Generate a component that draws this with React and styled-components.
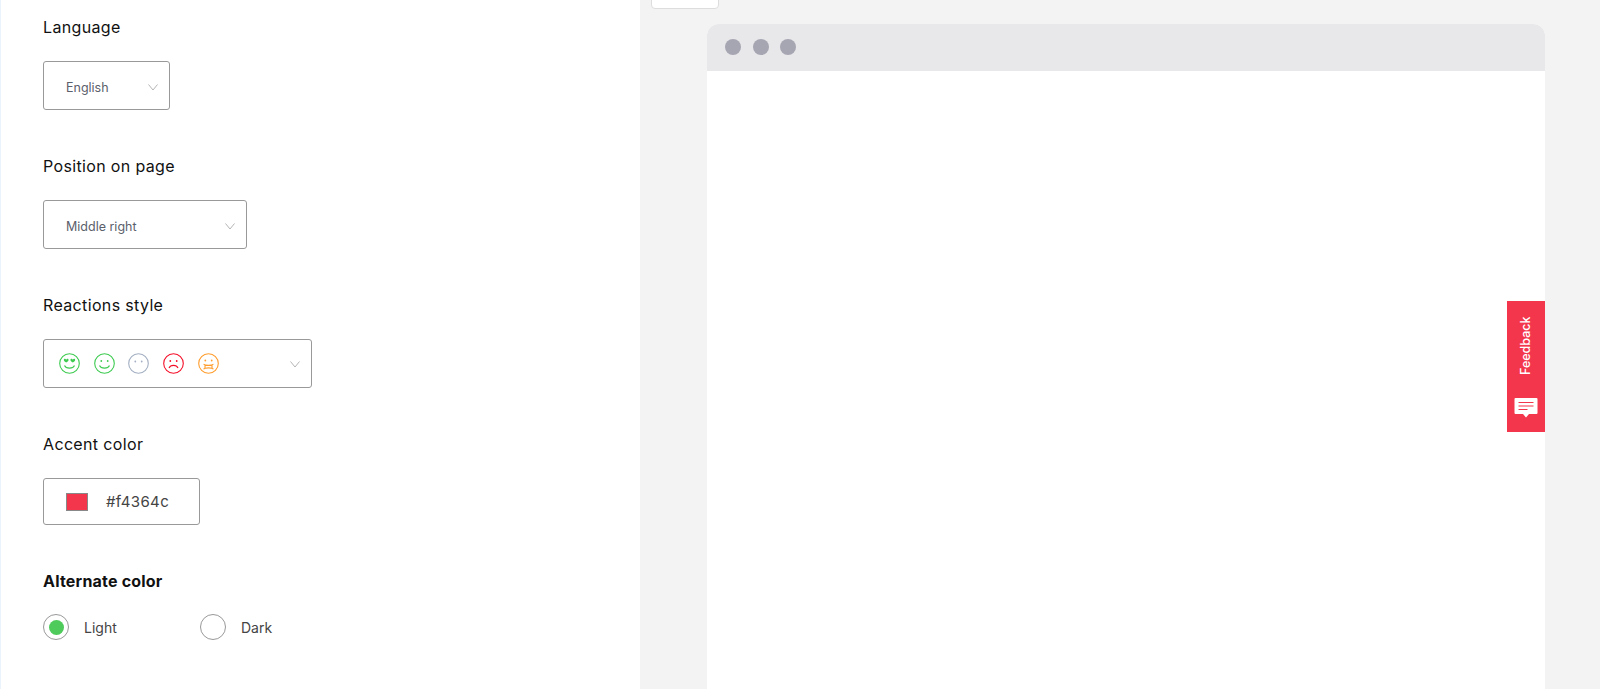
import React from "react";
import styled, { createGlobalStyle } from "styled-components";

const Global = createGlobalStyle`
  html, body { margin: 0; padding: 0; height: 100%; overflow: hidden; background: #fff; }
  body { font-family: "Inter", "Noto Sans", sans-serif; }
`;
const Page = styled.div`display: flex; height: 689px; overflow: hidden;`;
const Sidebar = styled.aside`
  width: 640px; flex: none; box-sizing: border-box; padding: 17px 0 0 43px;
  background: #fff; border-left: 1px solid #eaf3fb;
  display: flex; flex-direction: column; align-items: flex-start;
`;
const Field = styled.section`height: 139px; display: flex; flex-direction: column; align-items: flex-start;`;
const AltField = styled.section`margin-top: -2px;`;
const Label = styled.h3`
  margin: 0 0 24px -1px; font-size: 16px; line-height: 20px; letter-spacing: ${p => p.$bold ? ".2px" : ".35px"};
  font-weight: ${p => p.$bold ? 700 : 400}; color: #111;
`;
const Box = styled.div`
  margin-left: -1px; box-sizing: border-box; width: ${p => p.$w}px; height: ${p => p.$h || 49}px;
  border: 1px solid #999; border-radius: 3px; background: #fff;
  padding: ${p => p.$top || 0}px 11px 0 ${p => p.$pad || 22}px;
  display: flex; align-items: center; justify-content: space-between;
  font-size: 12.5px; color: #5b606b;
`;
const Faces = styled.div`display: flex; gap: 13.7px; margin-top: -1px;`;
const HexRow = styled.div`display: flex; align-items: center; gap: 18px; font-size: 15px; letter-spacing: .35px; color: #444;`;
const Swatch = styled.span`width: 22px; height: 18px; box-sizing: border-box; background: #f4364c; border: 1px solid #888;`;
const Radios = styled.div`display: flex; margin: -1px 0 0 -1px;`;
const RadioItem = styled.label`width: 157px; display: flex; align-items: center; gap: 15px; font-size: 14px; color: #444;`;
const RadioMark = styled.span`
  width: 26px; height: 26px; box-sizing: border-box; border-radius: 50%; border: 1px solid #999;
  display: flex; align-items: center; justify-content: center;
  &::after { content: ""; width: 15px; height: 15px; border-radius: 50%; background: ${p => p.$on ? "#4fcb5c" : "transparent"}; }
`;
const Stage = styled.main`
  flex: 1; background: #f3f3f3; position: relative; padding: 23.5px 55px 0 67px; box-sizing: border-box;
`;
const Tab = styled.div`
  position: absolute; left: 10.5px; top: -4px; width: 68px; height: 13px; box-sizing: border-box;
  background: #fff; border: 1px solid #ddd; border-radius: 4px;
`;
const Browser = styled.div`
  height: 100%; background: #fff; border-radius: 12px 12px 0 0; position: relative; overflow: hidden;
`;
const BrowserBar = styled.div`
  height: 47px; background: #e8e8ea; display: flex; align-items: center; gap: 11.5px; padding-left: 18px;
`;
const Dot = styled.span`width: 16px; height: 16px; border-radius: 50%; background: #a6a6b3;`;
const FeedbackTab = styled.div`
  position: absolute; right: 0; top: 277.5px; width: 38px; height: 131px; background: #f4364c;
  display: flex; flex-direction: column; align-items: center; color: #fff;
`;
const FeedbackText = styled.span`
  writing-mode: vertical-rl; transform: rotate(180deg); font-size: 12.5px; font-weight: 500; line-height: 14px;
  margin-top: 14px; height: 60px; text-align: left;
`;
const Chat = styled.svg`margin-top: 22px;`;

const Chevron = () => (
  <svg width="10" height="7" viewBox="0 0 10 7" fill="none" stroke="#b5b5b5" strokeWidth="1"><path d="M.5.5L5 6 9.500.5" /></svg>
);

const Face = ({ color, children }) => (
  <svg width="21" height="21" viewBox="0 0 21 21" fill="none" stroke={color} strokeWidth="1.100">
    <circle cx="10.500" cy="10.500" r="9.800" />
    {children}
  </svg>
);

const Eyes = ({ color, y }) => (
  <>
    <circle cx="7.300" cy={y} r=".9" fill={color} stroke="none" />
    <circle cx="13.700" cy={y} r=".9" fill={color} stroke="none" />
  </>
);

const App = () => (
  <>
    <Global />
    <Page>
      <Sidebar>
        <Field>
          <Label>Language</Label>
          <Box $w={127} $top={3}>English<Chevron /></Box>
        </Field>
        <Field>
          <Label>Position on page</Label>
          <Box $w={204} $top={3}>Middle right<Chevron /></Box>
        </Field>
        <Field>
          <Label>Reactions style</Label>
          <Box $w={269} $pad={15} $top={1}>
            <Faces>
              <Face color="#3ecb50">
                <path d="M4.800 7c0-1.500 1.900-1.500 2.400-.3.500-1.200 2.400-1.200 2.400.3 0 1.200-2.400 2.600-2.400 2.600s-2.400-1.400-2.400-2.600zM11.400 7c0-1.500 1.900-1.500 2.400-.3.500-1.200 2.400-1.200 2.400.3 0 1.200-2.400 2.600-2.400 2.600s-2.400-1.400-2.400-2.600z" fill="#3ecb50" stroke="none" />
                <path d="M5.500 12.500c1.500 3.500 8.500 3.500 10 0" />
              </Face>
              <Face color="#3ecb50">
                <Eyes color="#3ecb50" y={8} />
                <path d="M5.500 12.500c1.500 3.500 8.500 3.500 10 0" />
              </Face>
              <Face color="#a3afc2">
                <Eyes color="#a3afc2" y={8.500} />
              </Face>
              <Face color="#f4102a">
                <Eyes color="#f4102a" y={8} />
                <path d="M6 15c1.500-3.500 7.500-3.500 9 0" />
              </Face>
              <Face color="#ff9d2e">
                <Eyes color="#ff9d2e" y={7.500} />
                <path d="M5.500 11c1.500 1.800 8.500 1.800 10 0M5.500 16.200c1.500-1.800 8.500-1.800 10 0M7 12.200v2.800M14 12.200v2.800" />
              </Face>
            </Faces>
            <Chevron />
          </Box>
        </Field>
        <Field>
          <Label>Accent color</Label>
          <Box $w={157} $h={47}><HexRow><Swatch />#f4364c</HexRow></Box>
        </Field>
        <AltField>
          <Label $bold>Alternate color</Label>
          <Radios>
            <RadioItem><RadioMark $on />Light</RadioItem>
            <RadioItem><RadioMark />Dark</RadioItem>
          </Radios>
        </AltField>
      </Sidebar>
      <Stage>
        <Tab />
        <Browser>
          <BrowserBar><Dot /><Dot /><Dot /></BrowserBar>
          <FeedbackTab>
            <FeedbackText>Feedback</FeedbackText>
            <Chat width="24" height="22" viewBox="0 0 24 22">
              <path d="M1.500 1h21a1 1 0 0 1 1 1v14a1 1 0 0 1-1 1H15l-3 3.500L9 17H1.500a1 1 0 0 1-1-1V2a1 1 0 0 1 1-1z" fill="#fff" />
              <path d="M4.500 5.500h15M4.500 9h15M4.500 12.500h9" stroke="#f4364c" strokeWidth="1.200" />
            </Chat>
          </FeedbackTab>
        </Browser>
      </Stage>
    </Page>
  </>
);
export default App;
